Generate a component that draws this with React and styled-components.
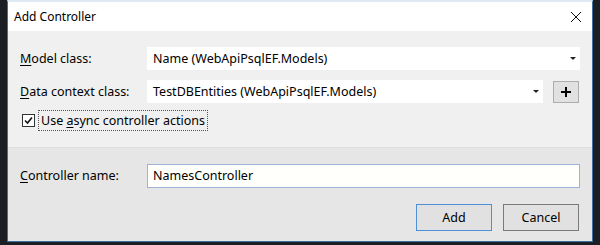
import styled, { createGlobalStyle } from "styled-components";

const GlobalStyle = createGlobalStyle`
  html, body {
    margin: 0;
    padding: 0;
    background: #1b1e23;
    width: 600px;
    height: 245px;
    overflow: hidden;
  }
`;

const Page = styled.div`
  display: flex;
  padding: 0 7px 0 7px;
  height: 245px;
  box-sizing: border-box;
  font-family: "Noto Sans", "Liberation Sans", sans-serif;
  font-size: 12.5px;
  color: #000;
`;

const Dialog = styled.div`
  width: 586px;
  height: 242px;
  box-sizing: border-box;
  border: 1px solid #3f6f9f;
  border-top: 2px solid #dfe9f3;
  display: flex;
  flex-direction: column;
  background: #f0f0f0;
`;

const TitleBar = styled.div`
  height: 29px;
  background: #fff;
  display: flex;
  align-items: center;
  justify-content: space-between;
  padding: 0 8px 0 6px;
  font-size: 12px;
`;

const CloseButton = styled.div`
  width: 16px;
  height: 16px;
  display: flex;
  align-items: center;
  justify-content: center;
`;

const Main = styled.div`
  display: flex;
  flex-direction: column;
  gap: 10px;
  padding: 16px 12px 0 12px;
  height: 116px;
  box-sizing: border-box;
`;

const Row = styled.div`
  display: flex;
  align-items: center;
  height: 23px;
`;

const Label = styled.div`
  width: 127px;
  flex-shrink: 0;
  u { text-decoration: underline; text-underline-offset: 2px; }
`;

const Select = styled.div`
  height: 23px;
  width: ${(p) => p.$width}px;
  background: #fff;
  display: flex;
  align-items: center;
  justify-content: space-between;
  padding: 0 4px 0 6px;
  box-sizing: border-box;
`;

const Arrow = styled.span`
  width: 0;
  height: 0;
  border-left: 3px solid transparent;
  border-right: 3px solid transparent;
  border-top: 3px solid #222;
`;

const PlusButton = styled.div`
  width: 26px;
  height: 22px;
  margin-left: 10px;
  box-sizing: border-box;
  border: 1px solid #adadad;
  background: #e1e1e1;
  display: flex;
  align-items: center;
  justify-content: center;
`;

const CheckRow = styled.div`
  display: flex;
  align-items: center;
  gap: 4px;
  margin-left: 2px;
  margin-top: -2px;
`;

const Box = styled.div`
  width: 13px;
  height: 13px;
  box-sizing: border-box;
  border: 1px solid #333;
  background: #fff;
  display: flex;
  align-items: center;
  justify-content: center;
`;

const FocusLabel = styled.div`
  padding: 1px 2px;
  outline: 1px dotted #555;
  u { text-decoration: underline; text-underline-offset: 2px; }
`;

const Footer = styled.div`
  flex: 1;
  background: #e6e6e6;
  border-top: 1px solid #dedede;
  display: flex;
  flex-direction: column;
  padding: 16px 12px 0 12px;
  gap: 17px;
`;

const TextInput = styled.div`
  width: 434px;
  height: 24px;
  box-sizing: border-box;
  border: 1px solid #9fb3d4;
  background: #fffffb;
  display: flex;
  align-items: center;
  padding-left: 5px;
`;

const Buttons = styled.div`
  display: flex;
  justify-content: flex-end;
  gap: 11px;
  padding-right: 1px;
`;

const Button = styled.div`
  width: 76px;
  height: 27px;
  box-sizing: border-box;
  border: 1px solid ${(p) => (p.$primary ? "#4f8fd6" : "#7a7a7a")};
  background: #e1e1e1;
  display: flex;
  align-items: center;
  justify-content: center;
`;

export default function App() {
  return (
    <>
      <GlobalStyle />
      <Page>
        <Dialog>
          <TitleBar>
            <span>Add Controller</span>
            <CloseButton>
              <svg width="12" height="12" viewBox="0 0 12 12">
                <path d="M1 1 L11 11 M11 1 L1 11" stroke="#111" strokeWidth="1" />
              </svg>
            </CloseButton>
          </TitleBar>
          <Main>
            <Row>
              <Label><u>M</u>odel class:</Label>
              <Select $width={434}>
                <span>Name (WebApiPsqlEF.Models)</span>
                <Arrow />
              </Select>
            </Row>
            <Row>
              <Label><u>D</u>ata context class:</Label>
              <Select $width={396}>
                <span>TestDBEntities (WebApiPsqlEF.Models)</span>
                <Arrow />
              </Select>
              <PlusButton>
                <svg width="12" height="12" viewBox="0 0 12 12">
                  <path d="M6 1 V11 M1 6 H11" stroke="#000" strokeWidth="2" />
                </svg>
              </PlusButton>
            </Row>
            <CheckRow>
              <Box>
                <svg width="11" height="11" viewBox="0 0 11 11">
                  <path d="M2 5.5 L4.5 8 L9 2.5" fill="none" stroke="#111" strokeWidth="1.6" />
                </svg>
              </Box>
              <FocusLabel>Use <u>a</u>sync controller actions</FocusLabel>
            </CheckRow>
          </Main>
          <Footer>
            <Row>
              <Label><u>C</u>ontroller name:</Label>
              <TextInput>NamesController</TextInput>
            </Row>
            <Buttons>
              <Button $primary>Add</Button>
              <Button>Cancel</Button>
            </Buttons>
          </Footer>
        </Dialog>
      </Page>
    </>
  );
}
